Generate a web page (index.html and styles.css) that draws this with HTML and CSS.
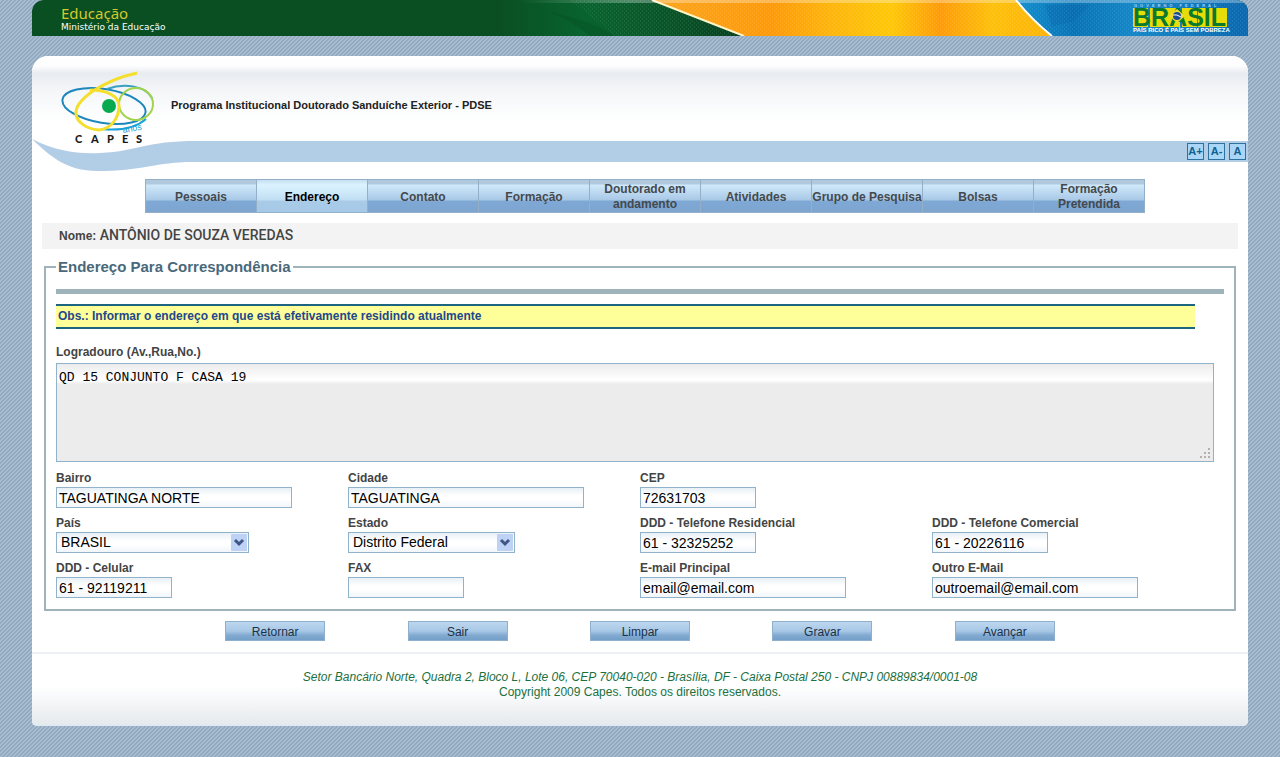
FILE: index.html
```html
<!DOCTYPE html>
<html lang="pt-BR">
<head>
<meta charset="utf-8">
<title>CAPES - PDSE</title>
<link rel="stylesheet" href="styles.css">
</head>
<body>
<div class="page">
  <div class="govbar">
    <div class="ministry">
      <span class="ministry-title">Educação</span>
      <span class="ministry-sub">Ministério da Educação</span>
    </div>
    <svg class="flag" width="748" height="36" viewBox="0 0 748 36" aria-label="Brasil">
      <defs>
        <linearGradient id="green"><stop offset="0" stop-color="#0a4f22"/><stop offset=".35" stop-color="#08642f"/><stop offset=".7" stop-color="#085427"/><stop offset="1" stop-color="#063f20"/></linearGradient>
        <linearGradient id="gold"><stop offset="0" stop-color="#fda51c"/><stop offset=".3" stop-color="#ff9a08"/><stop offset=".45" stop-color="#ffb60a"/><stop offset=".6" stop-color="#ffc805"/><stop offset=".72" stop-color="#ff9c08"/><stop offset=".85" stop-color="#ffc008"/><stop offset="1" stop-color="#ffb405"/></linearGradient>
        <linearGradient id="blue"><stop offset="0" stop-color="#1190cf"/><stop offset=".25" stop-color="#0874b8"/><stop offset=".5" stop-color="#1287c8"/><stop offset="1" stop-color="#0a68b0"/></linearGradient>
        <linearGradient id="shine"><stop offset="0" stop-color="#fff" stop-opacity="0"/><stop offset=".15" stop-color="#fff" stop-opacity=".3"/><stop offset="1" stop-color="#fff" stop-opacity=".3"/></linearGradient>
        <pattern id="weave" width="4" height="4" patternUnits="userSpaceOnUse"><path d="M0 0h1v2h-1zM2 2h1v2h-1z" fill="#fff" opacity=".08"/></pattern>
      </defs>
      <path d="M0 0H160L246 36H0Z" fill="url(#green)"/>
      <path d="M50 12Q90 20 115 36H90Q70 20 50 12Z" fill="#064a22" opacity=".3"/>
      <path d="M152 0H520L552 36H244Z" fill="url(#gold)"/>
      <path d="M516 0H748V36H551Q532 20 516 0Z" fill="url(#blue)"/>
      <path d="M545 5L552 26L572 22L590 5Z" fill="#0564a8" opacity=".35"/>
      <path d="M70 0H748V36H115Z" fill="url(#weave)"/>
      <path d="M152 0L244 36" stroke="#fff6c8" stroke-width="2" fill="none"/>
      <path d="M516 0Q532 20 552 36" stroke="#fff" stroke-width="2" fill="none"/>
      <path d="M20 0H748V3H20Z" fill="url(#shine)"/>
      <path d="M633 8h94v19h-94z" fill="#e8dc08"/>
      <path d="M648 8h2v19h-2zM680 8h2v19h-2zM697 8h1v19h-1z" fill="#1287c8"/>
      <text x="634" y="7" class="flag-over">GOVERNO FEDERAL</text>
      <text x="633" y="26" class="flag-word">BRASIL</text>
      <path d="M677 9l8 7-8 7-8-7z" fill="#f0dc30"/><circle cx="677" cy="16" r="4" fill="#1c4b92"/><path d="M673 15q4-1 8 2" stroke="#fff" fill="none"/>
      <text x="633" y="32" class="flag-under">PAÍS RICO É PAÍS SEM POBREZA</text>
    </svg>
  </div>

  <div class="card">
    <header class="header">
      <svg class="swoosh" width="165" height="34" viewBox="0 0 165 34" aria-hidden="true"><path d="M0 1C24 13 44 16 68 15C108 13 112 3 165 3V24C128 23 110 33 66 33C34 33 18 18 0 1Z" fill="#b2cde6"/></svg>
      <svg class="logo" width="98" height="76" viewBox="0 0 98 76" aria-label="CAPES 60 anos">
        <g fill="none" stroke-width="2">
          <ellipse cx="43" cy="35" rx="42" ry="17" transform="rotate(9 43 35)" stroke="#1b87bd"/>
          <path d="M46 18C62 12 84 14 91 27" stroke="#3aa0c0"/>
          <path d="M40 58C60 60 76 56 85 48" stroke="#18a2d8"/>
          <ellipse cx="75" cy="33" rx="17" ry="16" stroke="#a2d34a"/>
          <path d="M76 2C62 5 46 11 32 20C22 27 14 35 15 43C16 51 25 58 38 59C50 58 58 47 58 35C58 25 46 19 29 19" stroke="#f5df2e" stroke-width="3"/>
        </g>
        <circle cx="48" cy="35" r="7" fill="#07aa4e"/>
        <text x="62" y="62" class="logo-years" transform="rotate(-10 62 62)">anos</text>
        <g class="logo-name"><text x="14" y="72">C</text><text x="30" y="72">A</text><text x="46" y="72">P</text><text x="61" y="72">E</text><text x="75" y="72">S</text></g>
      </svg>
      <h1 class="program">Programa Institucional Doutorado Sanduíche Exterior - PDSE</h1>
    </header>
    <div class="band">
      <button class="zoom" type="button">A+</button>
      <button class="zoom" type="button">A-</button>
      <button class="zoom" type="button">A</button>
    </div>

    <nav class="tabs">
      <a class="tab" href="#">Pessoais</a>
      <a class="tab tab-active" href="#" aria-current="page">Endereço</a>
      <a class="tab" href="#">Contato</a>
      <a class="tab" href="#">Formação</a>
      <a class="tab" href="#">Doutorado em andamento</a>
      <a class="tab" href="#">Atividades</a>
      <a class="tab" href="#">Grupo de Pesquisa</a>
      <a class="tab" href="#">Bolsas</a>
      <a class="tab" href="#">Formação Pretendida</a>
    </nav>

    <p class="person">Nome: <span class="person-name">ANTÔNIO DE SOUZA VEREDAS</span></p>

    <form class="form">
      <fieldset class="address">
        <legend>Endereço Para Correspondência</legend>
        <hr class="rule">
        <p class="note">Obs.: Informar o endereço em que está efetivamente residindo atualmente</p>
        <div class="street">
          <label for="street">Logradouro (Av.,Rua,No.)</label>
          <div class="area-wrap">
            <textarea id="street" class="control area">QD 15 CONJUNTO F CASA 19</textarea>
            <svg class="grip" width="11" height="11" viewBox="0 0 11 11" aria-hidden="true"><path d="M8 0h2v2h-2zM4 4h2v2h-2zM8 4h2v2h-2zM0 8h2v2h-2zM4 8h2v2h-2zM8 8h2v2h-2z" fill="#b5b0ae"/></svg>
          </div>
        </div>
        <div class="fields">
          <div class="field"><label for="bairro">Bairro</label><input id="bairro" class="control w-large" value="TAGUATINGA NORTE"></div>
          <div class="field"><label for="cidade">Cidade</label><input id="cidade" class="control w-large" value="TAGUATINGA"></div>
          <div class="field field-wide"><label for="cep">CEP</label><input id="cep" class="control w-small" value="72631703"></div>
          <div class="field"><label for="pais">País</label>
            <div class="select-wrap w-country"><select id="pais" class="control"><option>BRASIL</option></select>
            <svg class="arrow" width="16" height="17" viewBox="0 0 16 17" aria-hidden="true"><rect width="16" height="17" rx="1" fill="#bdd2f5"/><path d="M4 6l4 4 4-4" fill="none" stroke="#3f5686" stroke-width="3"/></svg></div></div>
          <div class="field"><label for="estado">Estado</label>
            <div class="select-wrap w-state"><select id="estado" class="control"><option>Distrito Federal</option></select>
            <svg class="arrow" width="16" height="17" viewBox="0 0 16 17" aria-hidden="true"><rect width="16" height="17" rx="1" fill="#bdd2f5"/><path d="M4 6l4 4 4-4" fill="none" stroke="#3f5686" stroke-width="3"/></svg></div></div>
          <div class="field"><label for="tel-res">DDD - Telefone Residencial</label><input id="tel-res" class="control w-small" value="61 - 32325252"></div>
          <div class="field"><label for="tel-com">DDD - Telefone Comercial</label><input id="tel-com" class="control w-small" value="61 - 20226116"></div>
          <div class="field"><label for="celular">DDD - Celular</label><input id="celular" class="control w-small" value="61 - 92119211"></div>
          <div class="field"><label for="fax">FAX</label><input id="fax" class="control w-small" value=""></div>
          <div class="field"><label for="email">E-mail Principal</label><input id="email" class="control w-email" value="email@email.com"></div>
          <div class="field"><label for="email2">Outro E-Mail</label><input id="email2" class="control w-email" value="outroemail@email.com"></div>
        </div>
      </fieldset>
      <div class="actions">
        <button class="action" type="button">Retornar</button>
        <button class="action" type="button">Sair</button>
        <button class="action" type="reset">Limpar</button>
        <button class="action" type="button">Gravar</button>
        <button class="action" type="button">Avançar</button>
      </div>
    </form>

    <footer class="footer">
      <address>Setor Bancário Norte, Quadra 2, Bloco L, Lote 06, CEP 70040-020 - Brasília, DF - Caixa Postal 250 - CNPJ 00889834/0001-08</address>
      <p>Copyright 2009 Capes. Todos os direitos reservados.</p>
    </footer>
  </div>
</div>
</body>
</html>
```

FILE: styles.css
```css
* { box-sizing: border-box; }

body {
  margin: 0;
  font: 12px/15px "Liberation Sans", Arial, sans-serif;
  color: #444;
  background: #9fb5ca linear-gradient(135deg, #a8bdd1 25%, #92aac0 25%, #92aac0 50%, #a8bdd1 50%, #a8bdd1 75%, #92aac0 75%) 0 0 / 4px 4px;
}

p, h1 { margin: 0; }

.page { padding: 0 32px 31px; }

/* Government bar */
.govbar {
  display: flex;
  justify-content: space-between;
  height: 36px;
  margin-bottom: 20px;
  overflow: hidden;
  background: #0a4f22;
  border-radius: 12px 12px 0 0;
}
.ministry { display: flex; flex-direction: column; padding: 4px 0 0 29px; white-space: nowrap; }
.ministry-title { font: 15px/18px "Noto Sans", sans-serif; color: #d3c92c; }
.ministry-sub { font: 9px/10px "DejaVu Sans", sans-serif; color: #fff; }
.flag { flex: none; }
.flag-word { font: bold 25px "Liberation Sans", sans-serif; fill: #0b7a2c; }
.flag-over { font: bold 4px "Liberation Sans", sans-serif; fill: #a5d4ef; letter-spacing: 3px; }
.flag-under { font: bold 6px "Liberation Sans", sans-serif; fill: #fff; }

/* Card */
.card { background: #fff; border-radius: 16px 16px 5px 5px; overflow: hidden; }
.header {
  position: relative;
  display: flex;
  align-items: flex-start;
  height: 85px;
  padding: 15px 29px 0;
  background: linear-gradient(#fff 0, #fdfdfe 10px, #e8ebf0 17px, #f4f6f8 35px, #fff 65px);
}
.swoosh { position: absolute; left: 0; top: 82px; }
.logo { position: relative; flex: none; }
.logo-years { font: 9px "Liberation Sans", sans-serif; fill: #20a0d4; }
.logo-name { font: 900 11px Lato, sans-serif; fill: #1a1a1a; }
.program { margin: 27px 0 0 12px; font-size: 11px; line-height: 15px; color: #222; }
.band {
  display: flex;
  justify-content: flex-end;
  gap: 4px;
  height: 21px;
  margin-left: 164px;
  padding: 2px 2px 0 0;
  background: #b2cde6;
}
.zoom {
  width: 17px;
  height: 17px;
  padding: 0;
  font: bold 11px/15px "Liberation Sans", sans-serif;
  color: #0f6290;
  background: #a9d6f6;
  border: 1px solid #2d719c;
}

/* Navigation */
.tabs { display: flex; justify-content: center; margin-top: 17px; padding-left: 10px; }
.tab {
  display: flex;
  align-items: center;
  justify-content: center;
  width: 111px;
  height: 34px;
  padding-top: 2px;
  font-weight: bold;
  text-align: center;
  text-decoration: none;
  color: #44494d;
  background: linear-gradient(#b0c9df 0, #b0c9df 4px, #d0e9fa 5px, #a8c8e6 20px, #7fa8d5 21px, #7da5cf 100%);
  border: solid #94b0c8;
  border-width: 1px 0 1px 1px;
}
.tab:last-child { width: 112px; border-right-width: 1px; }
.tab-active { color: #000; background: linear-gradient(#c5dff1 0, #dbf3ff 5px, #c0def2 20px, #a9cbe8 21px, #a5c9e7 100%); }

/* Person */
.person { margin: 10px 10px 0; padding: 5px 17px; font-weight: bold; line-height: 15px; background: #f3f3f3; }
.person-name { font: 500 14px/14px Roboto, sans-serif; }

/* Form */
.address { min-width: 0; margin: 10px 12px 0; padding: 0 10px 11px; border: 2px solid #9fb3bb; }
legend { padding: 0 2px; font-size: 15px; font-weight: bold; line-height: 15px; color: #49697a; }
.rule { height: 5px; margin: 15px 0 10px; background: #9fb3bb; border: 0; }
.note {
  margin-right: 29px;
  padding: 3px 2px 4px;
  font-weight: bold;
  line-height: 14px;
  color: #23478c;
  background: #ffff99;
  border: solid #1b6580;
  border-width: 2px 0;
}
label { display: block; font-weight: bold; line-height: 17px; white-space: nowrap; }
.street { margin: 15px 10px 8px 0; }
.area-wrap { display: grid; margin-top: 2px; }
.control {
  display: block;
  width: 100%;
  height: 21px;
  margin: 0;
  padding: 0 2px;
  font: 14px/17px "Liberation Sans", sans-serif;
  color: #000;
  background: linear-gradient(#e8f0f6 0, #fff 8px, #fff 60%, #f1f6fb 100%);
  border: 1px solid #91b2cb;
  border-radius: 0;
}
.area {
  height: 99px;
  padding: 6px 2px;
  font: 13px/15px "Liberation Mono", monospace;
  background: linear-gradient(#ececec 0, #fff 16px, #ececec 20px);
  resize: none;
}
.area, .grip { grid-area: 1 / 1; }
.grip { place-self: end; margin: 0 3px 3px 0; }
.fields { display: grid; grid-template-columns: repeat(4, 1fr); row-gap: 7px; }
.field-wide { grid-column: span 2; }
.w-large { width: 236px; }
.w-small { width: 116px; }
.w-email { width: 206px; }
.w-country { width: 193px; }
.w-state { width: 167px; }
.select-wrap { display: grid; }
.select-wrap select { grid-area: 1 / 1; padding-left: 4px; appearance: none; }
.arrow { grid-area: 1 / 1; place-self: center end; margin-right: 2px; pointer-events: none; }

.actions { display: grid; grid-template-columns: repeat(5, 1fr); justify-items: center; width: 75%; margin: 10px auto 11px; }
.action {
  width: 100px;
  height: 20px;
  padding: 3px 0 0;
  font: 12px/15px "Liberation Sans", sans-serif;
  color: #1c3247;
  background: linear-gradient(#bdd6ee 0, #a8c8e6 9px, #84abd2 13px, #739fc9 100%);
  border: 1px solid #8fb0cd;
}

/* Footer */
.footer {
  padding: 16px 0 26px;
  text-align: center;
  color: #1b7040;
  border-top: 2px solid #edf0f4;
  background: linear-gradient(#fff 45%, #e7ebee 95%, #dfe9f2);
}
.footer address { font-style: italic; }
```
